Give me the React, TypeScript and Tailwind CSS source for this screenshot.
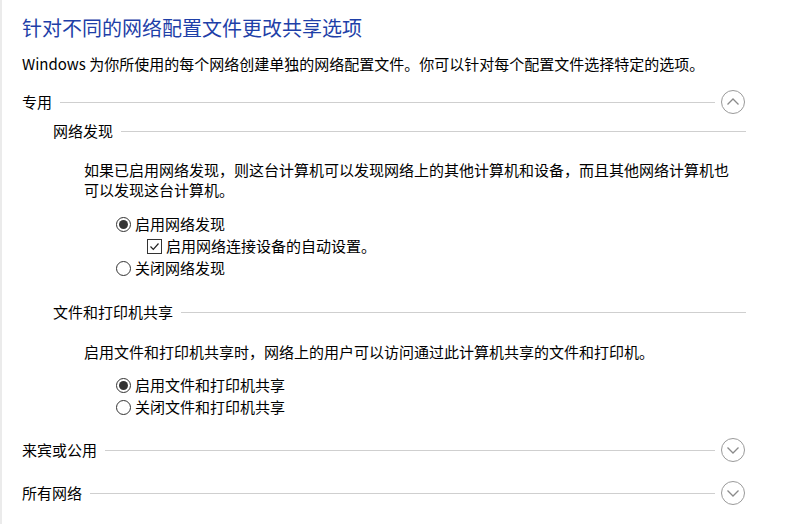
import React from "react";

const font = { fontFamily: '"Noto Sans CJK SC", "Noto Sans", sans-serif' };

function Chevron({ up }: { up?: boolean }) {
  return (
    <svg width="26" height="26" viewBox="0 0 26 26" className="shrink-0">
      <circle cx="13" cy="13" r="11.5" fill="none" stroke="#9a9a9a" strokeWidth="1" />
      {up ? (
        <path d="M7.5 15.5 L13 10 L18.5 15.5" fill="none" stroke="#8a8a8a" strokeWidth="1.3" />
      ) : (
        <path d="M7.5 10.5 L13 16 L18.5 10.5" fill="none" stroke="#8a8a8a" strokeWidth="1.3" />
      )}
    </svg>
  );
}

function Header({ label, up }: { label: string; up?: boolean }) {
  return (
    <div className="flex items-center h-[26px] pr-[49px]">
      <span className="text-[15px] text-black whitespace-nowrap">{label}</span>
      <div className="flex-1 h-px bg-[#cfcfcf] ml-[8px] mr-[5px]" />
      <Chevron up={up} />
    </div>
  );
}

function SubHeader({ label }: { label: string }) {
  return (
    <div className="flex items-center h-[22px] pl-[31px] pr-[49px]">
      <span className="text-[15px] text-black whitespace-nowrap">{label}</span>
      <div className="flex-1 h-px bg-[#cfcfcf] ml-[8px]" />
    </div>
  );
}

function Radio({ checked, label }: { checked?: boolean; label: string }) {
  return (
    <div className="flex items-center h-[22px]">
      <span className="w-[15px] h-[15px] rounded-full border border-[#333] bg-white flex items-center justify-center mr-[4px]">
        {checked && <span className="w-[9px] h-[9px] rounded-full bg-[#333]" />}
      </span>
      <span className="text-[15px] text-black">{label}</span>
    </div>
  );
}

function Check({ label }: { label: string }) {
  return (
    <div className="flex items-center h-[22px] pl-[31px]">
      <span className="w-[15px] h-[15px] border border-[#333] bg-white flex items-center justify-center mr-[4px]">
        <svg width="11" height="11" viewBox="0 0 11 11">
          <path d="M1.5 5.5 L4.3 8.3 L9.5 2.5" fill="none" stroke="#222" strokeWidth="1.2" />
        </svg>
      </span>
      <span className="text-[15px] text-black">{label}</span>
    </div>
  );
}

export default function App() {
  return (
    <div className="w-[795px] h-[524px] bg-white border-l-2 border-[#ebebeb] overflow-hidden" style={font}>
      <div className="pl-[20px] pt-[14px]">
        <h1 className="text-[20px] leading-[28px] text-[#1e3fa8] font-normal">针对不同的网络配置文件更改共享选项</h1>
        <p className="text-[15px] leading-[20px] text-black mt-[12px]">
          Windows 为你所使用的每个网络创建单独的网络配置文件。你可以针对每个配置文件选择特定的选项。
        </p>

        <div className="mt-[15px]">
          <Header label="专用" up />
        </div>

        <div className="mt-[5px]">
          <SubHeader label="网络发现" />
        </div>
        <p className="text-[15px] leading-[20px] text-black pl-[62px] pr-[61px] mt-[18px]">
          如果已启用网络发现，则这台计算机可以发现网络上的其他计算机和设备，而且其他网络计算机也可以发现这台计算机。
        </p>
        <div className="pl-[94px] mt-[13px] flex flex-col">
          <Radio checked label="启用网络发现" />
          <Check label="启用网络连接设备的自动设置。" />
          <Radio label="关闭网络发现" />
        </div>

        <div className="mt-[22px]">
          <SubHeader label="文件和打印机共享" />
        </div>
        <p className="text-[15px] leading-[20px] text-black pl-[62px] pr-[61px] mt-[19px]">
          启用文件和打印机共享时，网络上的用户可以访问通过此计算机共享的文件和打印机。
        </p>
        <div className="pl-[94px] mt-[12px] flex flex-col">
          <Radio checked label="启用文件和打印机共享" />
          <Radio label="关闭文件和打印机共享" />
        </div>

        <div className="mt-[19px]">
          <Header label="来宾或公用" />
        </div>
        <div className="mt-[17px]">
          <Header label="所有网络" />
        </div>
      </div>
    </div>
  );
}
